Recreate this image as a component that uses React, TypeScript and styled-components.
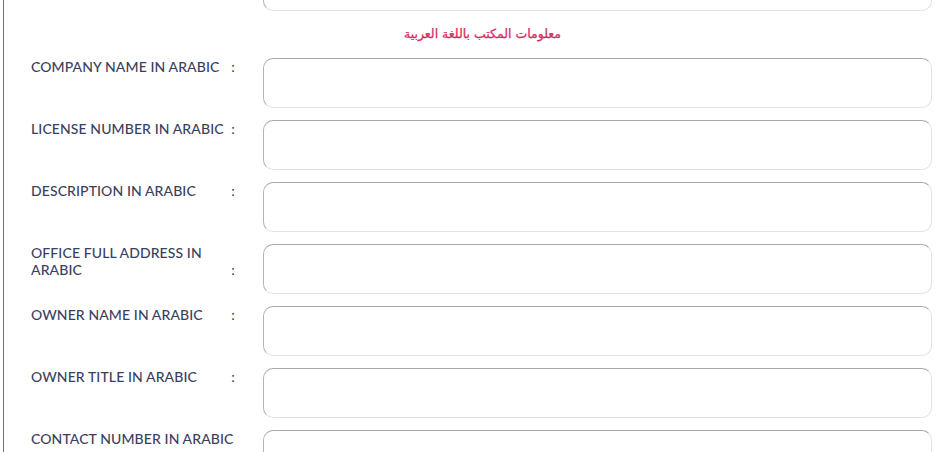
import React from "react";
import styled, { createGlobalStyle } from "styled-components";

const Global = createGlobalStyle`
  html, body { margin: 0; padding: 0; background: #ffffff; overflow: hidden; }
  body { width: 939px; height: 452px; }
`;

const Page = styled.div`
  margin-left: 3px;
  border-left: 1px solid #c9416c;
  height: 452px;
  overflow: hidden;
  padding: 0 7px 0 27px;
`;

const Scroller = styled.div`
  margin-top: -39px;
  display: flex;
  flex-direction: column;
`;

const Heading = styled.div`
  font-family: "DejaVu Sans", "Liberation Sans", sans-serif;
  font-size: 12.5px;
  font-weight: 400;
  line-height: 18px;
  color: #d42a62;
  direction: rtl;
  text-align: center;
  padding-left: 2px;
  margin: 14px 0 15px;
  -webkit-text-stroke: 0.25px #d42a62;
`;

const Rows = styled.div`
  display: flex;
  flex-direction: column;
  gap: 12px;
`;

const Row = styled.div`
  display: grid;
  grid-template-columns: 206px 1fr;
  column-gap: 26px;
  align-items: start;
`;

const Label = styled.label`
  font-family: Lato, "Open Sans", sans-serif;
  font-weight: 500;
  font-size: 14px;
  line-height: 17px;
  letter-spacing: 0.1px;
  color: #3b3f5e;
  text-transform: uppercase;
`;

const Colon = styled.span`
  float: right;
  padding-right: 2px;
`;

const Field = styled.input`
  box-sizing: border-box;
  height: 50px;
  width: 100%;
  border-radius: 10px;
  border: 1px solid #e3e3e3;
  border-top-color: #a9a9a9;
  border-left-color: #b5b5b5;
  background: #fff;
  outline: none;
`;

const labels = [
  "COMPANY NAME IN ARABIC",
  "LICENSE NUMBER IN ARABIC",
  "DESCRIPTION IN ARABIC",
  "OFFICE FULL ADDRESS IN ARABIC",
  "OWNER NAME IN ARABIC",
  "OWNER TITLE IN ARABIC",
  "CONTACT NUMBER IN ARABIC",
];

export default function App() {
  return (
    <>
      <Global />
      <Page>
        <Scroller>
          <Row>
            <Label />
            <Field />
          </Row>
          <Heading>معلومات المكتب باللغة العربية</Heading>
          <Rows>
            {labels.map((l) => (
              <Row key={l}>
                <Label>
                  {l} <Colon>:</Colon>
                </Label>
                <Field />
              </Row>
            ))}
          </Rows>
        </Scroller>
      </Page>
    </>
  );
}
